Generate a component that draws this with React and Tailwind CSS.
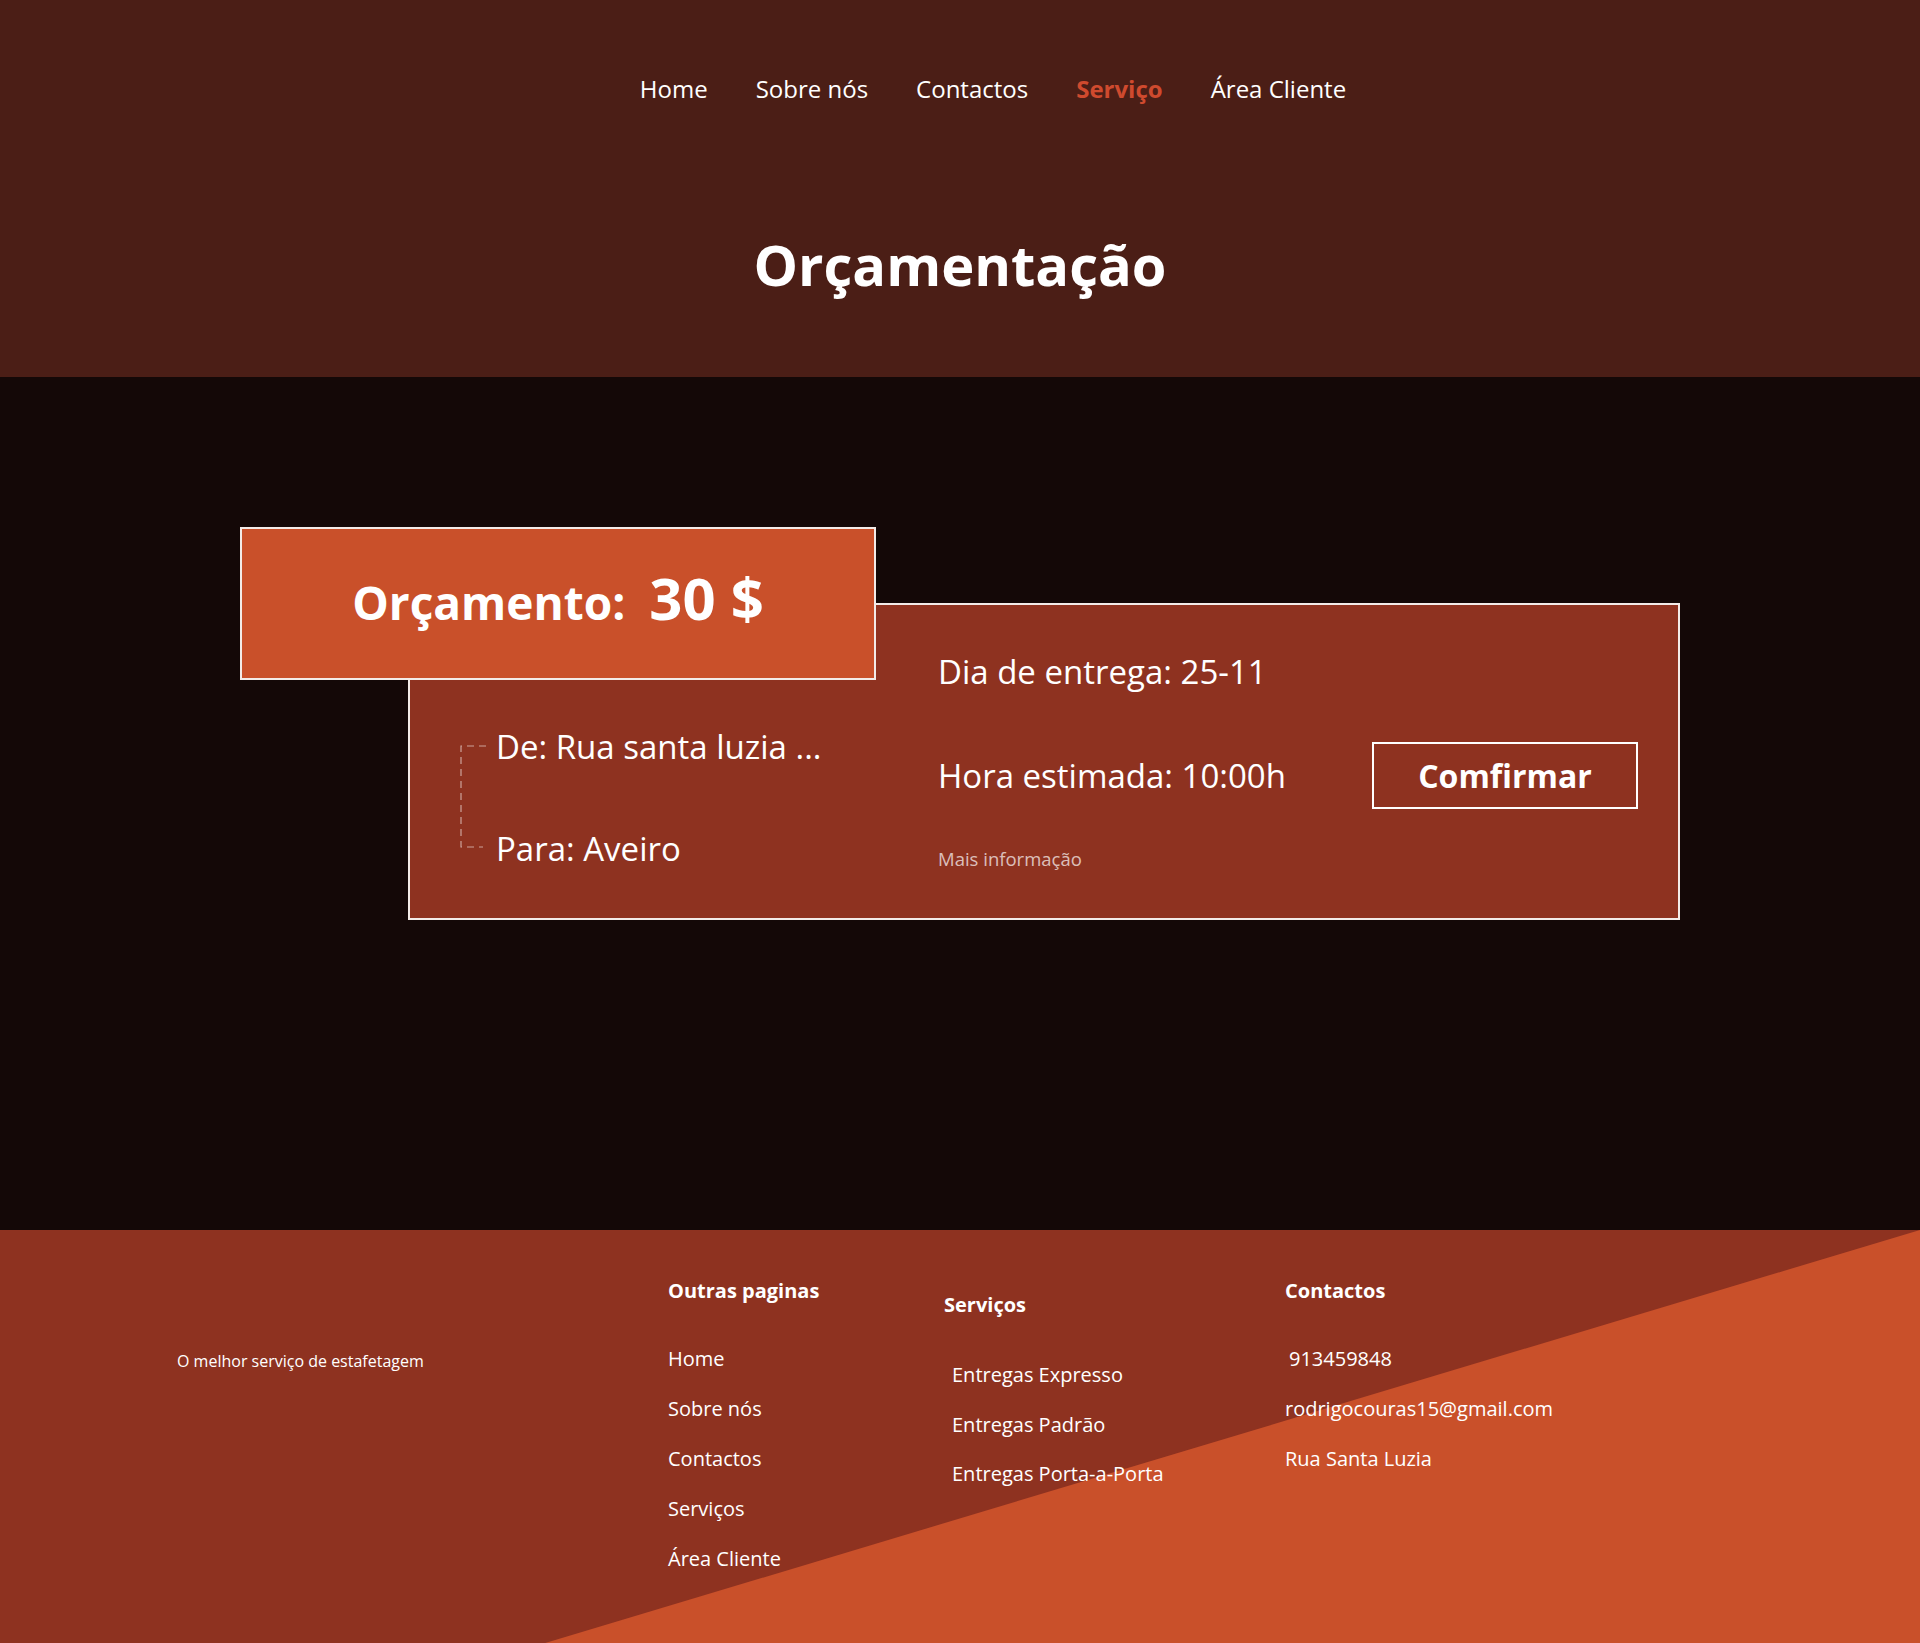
const navLinks = ["Home", "Sobre nós", "Contactos", "Serviço", "Área Cliente"];
const otherPages = ["Home", "Sobre nós", "Contactos", "Serviços", "Área Cliente"];
const services = ["Entregas Expresso", "Entregas Padrão", "Entregas Porta-a-Porta"];

function RouteBracket() {
  return (
    <svg width="26" height="103" viewBox="0 0 26 103" className="mt-[19px] shrink-0">
      <path
        d="M26 1 H1 V102 H23"
        fill="none"
        stroke="rgba(255,255,255,0.55)"
        strokeWidth="1.2"
        strokeDasharray="7 5"
      />
    </svg>
  );
}

export default function App() {
  return (
    <div className="min-h-screen w-[1920px] font-['Open_Sans',sans-serif] text-white">
      <header className="h-[377px] bg-[#4b1e16]">
        <nav className="flex justify-center gap-[48px] pl-[66px] pt-[71px] text-[24px] leading-[36px]">
          {navLinks.map((l) => (
            <a
              key={l}
              href="#"
              className={l === "Serviço" ? "font-bold text-[#cf4a2e]" : "text-white"}
            >
              {l}
            </a>
          ))}
        </nav>
        <h1 className="mt-[123px] text-center text-[56px] font-bold leading-[68px]">
          Orçamentação
        </h1>
      </header>

      <main className="h-[853px] bg-[#140807] pt-[150px]">
        <div className="relative z-10 ml-[240px] flex h-[153px] w-[636px] items-baseline justify-center gap-[24px] border-2 border-[#f3ebe8] bg-[#c9502a] pt-[40px] font-bold">
          <span className="text-[46px] leading-[46px]">Orçamento:</span>
          <span className="text-[58px] leading-[58px]">30 $</span>
        </div>

        <div className="-mt-[77px] ml-[408px] flex h-[317px] w-[1272px] border-2 border-[#f3ebe8] bg-[#8e3220]">
          <div className="flex w-[528px] shrink-0 items-start pl-[50px] pt-[121px]">
            <RouteBracket />
            <div className="ml-[10px] flex flex-col gap-[61px] text-[33px] leading-[41px]">
              <span>De: Rua santa luzia ...</span>
              <span>Para: Aveiro</span>
            </div>
          </div>

          <div className="flex flex-1 flex-col pr-[40px] pt-[46px]">
            <p className="text-[33px] leading-[41px]">Dia de entrega: 25-11</p>
            <div className="mt-[50px] flex h-[67px] items-center justify-between">
              <p className="text-[33px] leading-[41px]">Hora estimada: 10:00h</p>
              <button className="flex h-[67px] w-[266px] items-center justify-center border-2 border-white text-[32px] font-bold leading-[40px]">
                Comfirmar
              </button>
            </div>
            <a href="#" className="mt-[36px] text-[18.5px] leading-[27px] text-white/70">
              Mais informação
            </a>
          </div>
        </div>
      </main>

      <footer className="relative h-[413px] overflow-hidden bg-[#8e3220]">
        <div className="absolute inset-0 bg-[#c9502a] [clip-path:polygon(100%_0,100%_100%,28.4%_100%)]" />
        <div className="relative flex pl-[177px]">
          <div className="w-[491px] shrink-0 pt-[120px] text-[16px] leading-[23px]">
            O melhor serviço de estafetagem
          </div>

          <div className="flex w-[276px] shrink-0 flex-col pt-[46px]">
            <h3 className="text-[20px] font-bold leading-[30px]">Outras paginas</h3>
            <ul className="mt-[38px] flex flex-col gap-[21px] text-[20px] leading-[29px]">
              {otherPages.map((p) => (
                <li key={p}>{p}</li>
              ))}
            </ul>
          </div>

          <div className="flex w-[341px] shrink-0 flex-col pt-[60px]">
            <h3 className="text-[20px] font-bold leading-[30px]">Serviços</h3>
            <ul className="mt-[40px] flex flex-col gap-[20.5px] pl-[8px] text-[20px] leading-[29px]">
              {services.map((s) => (
                <li key={s}>{s}</li>
              ))}
            </ul>
          </div>

          <div className="flex flex-col pt-[46px]">
            <h3 className="text-[20px] font-bold leading-[30px]">Contactos</h3>
            <ul className="mt-[38px] flex flex-col gap-[21px] text-[20px] leading-[29px]">
              <li className="pl-[4px]">913459848</li>
              <li>rodrigocouras15@gmail.com</li>
              <li>Rua Santa Luzia</li>
            </ul>
          </div>
        </div>
      </footer>
    </div>
  );
}
